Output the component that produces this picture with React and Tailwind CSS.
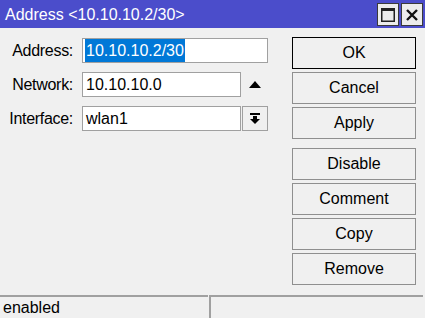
import React from "react";

const fields = [
  { label: "Address", value: "10.10.10.2/30", selected: true },
  { label: "Network", value: "10.10.10.0", extra: "up" },
  { label: "Interface", value: "wlan1", extra: "drop" },
];

const topButtons = ["OK", "Cancel", "Apply"];
const bottomButtons = ["Disable", "Comment", "Copy", "Remove"];

const Button = ({ text, focused }) => (
  <div
    className={`h-[32px] w-[124px] flex items-center justify-center text-[16px] text-black border ${
      focused ? "border-black" : "border-[#8f8f8f]"
    }`}
  >
    {text}
  </div>
);

export default function App() {
  return (
    <div
      className="w-[425px] h-[318px] bg-[#f0f0f0] flex flex-col overflow-hidden"
      style={{ fontFamily: '"Liberation Sans", Arial, sans-serif' }}
    >
      {/* Title bar */}
      <div className="h-[28px] bg-[#4b4dcb] flex items-center pl-[5px] pr-[2px]">
        <span className="text-white text-[16px] pt-[2px] flex-1">Address &lt;10.10.10.2/30&gt;</span>
        <div className="flex gap-[2px] pt-[1px]">
          <div className="w-[22px] h-[23px] bg-[#ececec] border border-[#3a3a3a] flex items-center justify-center">
            <svg width="14" height="14" viewBox="0 0 14 14">
              <rect x="0.75" y="0.75" width="12.5" height="12.5" fill="none" stroke="#222" strokeWidth="1.5" />
              <rect x="0" y="0" width="14" height="3" fill="#222" />
            </svg>
          </div>
          <div className="w-[22px] h-[23px] bg-[#ececec] border border-[#3a3a3a] flex items-center justify-center">
            <svg width="12" height="12" viewBox="0 0 12 12">
              <path d="M1 1 L11 11 M11 1 L1 11" stroke="#111" strokeWidth="2.4" />
            </svg>
          </div>
        </div>
      </div>

      {/* Body */}
      <div className="flex-1 flex">
        <div className="w-[292px] pt-[10px] flex flex-col gap-[9px]">
          {fields.map((f) => (
            <div key={f.label} className="flex items-center h-[25px]">
              <div className="w-[73px] text-right text-[16px] tracking-[-0.3px] text-black">{f.label}:</div>
              <div className="ml-[9px] flex items-center">
                <div
                  className={`h-[25px] bg-white border border-[#a0a0a0] flex items-center px-[2px] text-[16px] text-black ${
                    f.extra ? "w-[159px]" : "w-[186px]"
                  }`}
                >
                  {f.selected ? (
                    <span className="bg-[#0078d7] text-white h-[23px] flex items-center px-[1px]">{f.value}</span>
                  ) : (
                    <span className="pl-[1px]">{f.value}</span>
                  )}
                </div>
                {f.extra === "up" && (
                  <div className="w-[27px] h-[25px] flex items-center justify-center">
                    <svg width="12" height="7" viewBox="0 0 12 7">
                      <path d="M0 7 L6 0 L12 7 Z" fill="#000" />
                    </svg>
                  </div>
                )}
                {f.extra === "drop" && (
                  <div className="ml-[1px] w-[26px] h-[25px] border border-[#a0a0a0] flex items-center justify-center">
                    <svg width="10" height="11" viewBox="0 0 10 11">
                      <rect x="0" y="0" width="10" height="2" fill="#000" />
                      <rect x="3" y="3" width="4" height="3" fill="#000" />
                      <path d="M0 6 L10 6 L5 11 Z" fill="#000" />
                    </svg>
                  </div>
                )}
              </div>
            </div>
          ))}
        </div>

        <div className="pt-[9px] flex flex-col">
          <div className="flex flex-col gap-[3px]">
            {topButtons.map((b) => (
              <Button key={b} text={b} focused={b === "OK"} />
            ))}
          </div>
          <div className="mt-[9px] flex flex-col gap-[3px]">
            {bottomButtons.map((b) => (
              <Button key={b} text={b} />
            ))}
          </div>
        </div>
      </div>

      {/* Status bar */}
      <div className="h-[23px] flex">
        <div className="w-[208px] border-t-2 border-[#a0a0a0] pl-[3px] text-[16px] text-black leading-[21px]">
          enabled
        </div>
        <div className="ml-[1px] w-[214px] border-t-2 border-l-2 border-[#a0a0a0]" />
      </div>
    </div>
  );
}
